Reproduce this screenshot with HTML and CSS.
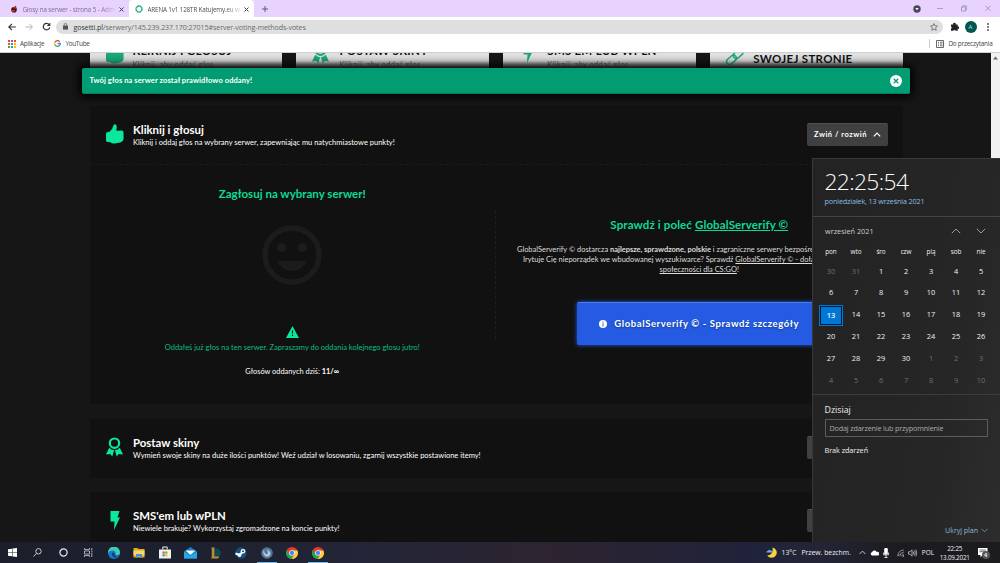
FILE: index.html
```html
<!DOCTYPE html>
<html lang="pl">
<head>
<meta charset="utf-8">
<title>ARENA 1v1 128TR Katujemy.eu</title>
<link rel="stylesheet" href="styles.css">
</head>
<body>
<svg width="0" height="0" class="defs">
  <symbol id="thumb" viewBox="0 0 18 20"><path d="M0 10 Q0 8.500 1.300 8.200 L3.500 7.800 Q6.500 5.500 7.600 1.200 Q8.200 0 9.400.300 Q11 1 10.700 3.500 L10.400 6.800 L16 6.600 Q17.800 7 17.500 9 L17.600 15 Q17 18 14.500 18.500 L8 19.500 Q5.500 19.500 4.500 18.200 L1.500 18 Q0 17.800 0 16Z"/></symbol>
  <symbol id="award" viewBox="0 0 17 20"><circle cx="8.500" cy="6.200" r="4.700" fill="none" stroke="currentColor" stroke-width="2.200"/><path d="M3.200 10.800 Q5 13 8.100 13.300 L6.300 19.500 4.300 17 0 17.600ZM13.800 10.800 Q12 13 8.900 13.300 L10.700 19.500 12.700 17 17 17.600Z"/></symbol>
  <symbol id="bolt" viewBox="0 0 10 19"><path d="M.5 0H9.500L7.500 6.500H10L4 19 4.500 10.500H.5Z"/></symbol>
  <symbol id="chrome" viewBox="0 0 12 12"><circle cx="6" cy="6" r="6" fill="#e8392c"/><path d="M.8 3 A6 6 0 0 0 5.500 12 L8.300 7.300 6 8.500 3.500 7Z" fill="#21a453"/><path d="M11.400 3.400H6L8.600 7.200 5.700 12A6 6 0 0 0 11.400 3.400Z" fill="#fdd23c"/><circle cx="6" cy="6" r="2.800" fill="#fff"/><circle cx="6" cy="6" r="2.150" fill="#4285f4"/></symbol>
</svg>
<div class="desktop">
  <header class="tabs">
    <div class="tab">
      <svg class="fav" viewBox="0 0 8 8"><circle cx="4" cy="4.800" r="2.800" fill="#3a1518"/><path d="M2.500 3 L6 .5 6.500 4Z" fill="#a33"/><path d="M2 5h3v1.500H2z" fill="#d33"/></svg>
      <span class="tab-title">Głosy na serwer - strona 5 - Adm</span><svg class="x" viewBox="0 0 5 5"><path d="M.5.500l4 4M4.500.500l-4 4"/></svg>
    </div>
    <div class="tab active">
      <svg class="fav" viewBox="0 0 8 8"><circle cx="4" cy="4" r="3" fill="none" stroke="#18a878" stroke-width="1.300" stroke-dasharray="2.100 .25"/></svg>
      <span class="tab-title">ARENA 1v1 128TR Katujemy.eu w</span><svg class="x" viewBox="0 0 5 5"><path d="M.5.500l4 4M4.500.500l-4 4"/></svg>
    </div>
    <svg class="plus" viewBox="0 0 8 8"><path d="M4 1v6M1 4h6" stroke="#555" stroke-width=".9"/></svg>
    <div class="winctl">
      <svg class="media" width="8" height="8" viewBox="0 0 8 8"><circle cx="4" cy="4" r="3.700" fill="#4c4657"/><path d="M2.300 3h3.400L4 5.200z" fill="#fff"/></svg>
      <svg width="6" height="8" viewBox="0 0 6 8"><path d="M0 3.500h6" stroke="#a093b3" stroke-width=".8"/></svg>
      <svg width="6" height="8" viewBox="0 0 6 8"><path d="M.5 2h4v4h-4zM1.700 2V.8h4v4H4.500" fill="none" stroke="#8f84a0" stroke-width=".7"/></svg>
      <svg width="6" height="8" viewBox="0 0 6 8"><path d="M.5.800l5 5M5.500.800l-5 5" stroke="#8f84a0" stroke-width=".7"/></svg>
    </div>
  </header>
  <div class="toolbar">
    <svg width="8" height="8" viewBox="0 0 8 8"><path d="M7.800 4H1M4 .8L.8 4 4 7.200" fill="none" stroke="#333" stroke-width="1.100"/></svg>
    <svg width="8" height="8" viewBox="0 0 8 8"><path d="M.5 4H7M4.300.800L7.500 4 4.300 7.200" fill="none" stroke="#aaa" stroke-width=".9"/></svg>
    <svg class="reload" width="9" height="9" viewBox="0 0 9 9"><path d="M7.200 2.600A3.300 3.300 0 1 0 7.800 5.300" fill="none" stroke="#333" stroke-width="1.200"/><path d="M8.300.500v3.500H4.800z" fill="#333"/></svg>
    <div class="omnibox">
      <svg width="5" height="7" viewBox="0 0 5 7"><path d="M0 2.600h5v4H0z" fill="#555"/><path d="M1.200 3V1.800a1.300 1.300 0 0 1 2.600 0V3" fill="none" stroke="#555" stroke-width=".7"/></svg>
      <span class="url"><b>gosetti.pl</b>/serwery/145.239.237.170:27015#server-voting-methods-votes</span>
      <svg class="star" width="8" height="8" viewBox="0 0 8 8"><path d="M4 .6l1 2.200 2.500.3L5.600 4.800l.6 2.500L4 6 1.800 7.300l.6-2.500L.5 3.100 3 2.800z" fill="none" stroke="#555" stroke-width=".7"/></svg>
    </div>
    <svg class="puzzle" width="8" height="9" viewBox="0 0 8 9"><path d="M0 2.400h2.200a1.300 1.300 0 1 1 2.500 0h2v2.100a1.200 1.200 0 1 1 0 2.300v2H4.600a1.200 1.200 0 0 0-2.300 0H0V6.600a1.200 1.200 0 0 0 0-2.200z" fill="#222"/></svg>
    <span class="avatar">A</span>
    <svg class="dots" width="2" height="8" viewBox="0 0 2 8"><circle cx="1" cy="1" r=".9"/><circle cx="1" cy="4" r=".9"/><circle cx="1" cy="7" r=".9"/></svg>
  </div>
  <div class="bookmarks">
    <svg width="8" height="8" viewBox="0 0 8 8"><path d="M0 0h2v2H0zM3 0h2v2H3zM6 0h2v2H6zM0 3h2v2H0z" fill="#e8493b"/><path d="M3 3h2v2H3z" fill="#4285f4"/><path d="M0 6h2v2H0zM3 6h2v2H3z" fill="#34a853"/><path d="M6 3h2v2H6zM6 6h2v2H6z" fill="#fbbc05"/></svg>
    <span class="bm1">Aplikacje</span>
    <svg width="7" height="7" viewBox="0 0 7 7" fill="none" stroke-width="1.300"><path d="M5.700 1.600A2.800 2.800 0 0 0 1 2.200" stroke="#ea4335"/><path d="M1 2.200A2.800 2.800 0 0 0 1 4.800" stroke="#fbbc05"/><path d="M1 4.800A2.800 2.800 0 0 0 5.200 5.700" stroke="#34a853"/><path d="M5.200 5.700A2.800 2.800 0 0 0 6.300 3.500H3.600" stroke="#4285f4"/></svg>
    <span class="bm2">YouTube</span>
    <div class="reading">
      <svg width="8" height="8" viewBox="0 0 8 8"><path d="M.5.500h7v7h-7zM2 2.300h1M4 2.300h2.500M2 4h1M4 4h2.500M2 5.700h1M4 5.700h2.500" fill="none" stroke="#444" stroke-width=".8"/></svg>
      <span>Do przeczytania</span>
    </div>
  </div>

  <main class="page">
    <div class="content">
      <div class="methods">
        <div class="method"><svg class="m-thumb"><use href="#thumb"/></svg><div><h3>KLIKNIJ I GŁOSUJ</h3><p>Kliknij, aby oddać głos</p></div></div>
        <div class="method"><svg class="m-award"><use href="#award"/></svg><div><h3>POSTAW SKINY</h3><p>Kliknij, aby oddać głos</p></div></div>
        <div class="method"><svg class="m-bolt"><use href="#bolt"/></svg><div><h3>SMS'EM LUB WPLN</h3><p>Kliknij, aby oddać głos</p></div></div>
        <div class="method last"><svg class="m-link" viewBox="0 0 18 18"><g fill="none" stroke="#18a878" stroke-width="1.500" transform="rotate(-42 9 9)"><rect x="-1" y="5.800" width="11" height="6" rx="3"/><rect x="8" y="5.800" width="11" height="6" rx="3"/></g></svg><div><h3>SWOJEJ STRONIE</h3></div></div>
      </div>

      <section class="panel open">
        <div class="head">
          <svg class="i-thumb"><use href="#thumb"/></svg>
          <div class="titles"><h2>Kliknij i głosuj</h2><p>Kliknij i oddaj głos na wybrany serwer, zapewniając mu natychmiastowe punkty!</p></div>
          <button class="toggle"><span>Zwiń / rozwiń</span><svg width="8" height="5" viewBox="0 0 8 5"><path d="M.8 4.300L4 1.100 7.200 4.300" fill="none" stroke="#fff" stroke-width="1.200"/></svg></button>
        </div>
        <div class="cols">
          <div class="vote">
            <h4>Zagłosuj na wybrany serwer!</h4>
            <svg class="smile" width="60" height="60" viewBox="0 0 60 60"><circle cx="30" cy="30" r="27" fill="none" stroke="#1c1c1c" stroke-width="5.500"/><circle cx="19.500" cy="22.500" r="4.500"/><circle cx="40.500" cy="22.500" r="4.500"/><path d="M15 36H45Q40 46 30 46T15 36Z"/></svg>
            <svg class="warn" width="13" height="12" viewBox="0 0 13 12"><path d="M6.500 0L13 12H0z" fill="#0ae8a0"/><path d="M6.500 4.500v3M6.500 8.700v1.400" stroke="#111" stroke-width="1.200"/></svg>
            <p class="done">Oddałeś już głos na ten serwer. Zapraszamy do oddania kolejnego głosu jutro!</p>
            <p class="count">Głosów oddanych dziś: <b>11/∞</b></p>
          </div>
          <div class="divider"></div>
          <div class="promo">
            <h4>Sprawdź i poleć <u>GlobalServerify ©</u></h4>
            <p class="l1">GlobalServerify © dostarcza <b>najlepsze, sprawdzone, polskie</b> i zagraniczne serwery bezpośrednio</p>
            <p class="l2">Irytuje Cię nieporządek we wbudowanej wyszukiwarce? Sprawdź <u>GlobalServerify © - dołącz do</u></p>
            <p class="l3"><u>społeczności dla CS:GO</u>!</p>
            <a class="cta"><svg width="8" height="8" viewBox="0 0 8 8"><circle cx="4" cy="4" r="4" fill="#fff"/><path d="M4 1.500v1.100M4 3.400v3" stroke="#245be2" stroke-width="1"/></svg><span>GlobalServerify © - Sprawdź szczegóły</span></a>
          </div>
        </div>
      </section>

      <section class="panel">
        <div class="head">
          <svg class="i-award"><use href="#award"/></svg>
          <div class="titles"><h2>Postaw skiny</h2><p>Wymień swoje skiny na duże ilości punktów! Weź udział w losowaniu, zgarnij wszystkie postawione itemy!</p></div>
          <button class="toggle"></button>
        </div>
      </section>
      <section class="panel">
        <div class="head">
          <svg class="i-bolt"><use href="#bolt"/></svg>
          <div class="titles"><h2>SMS'em lub wPLN</h2><p>Niewiele brakuje? Wykorzystaj zgromadzone na koncie punkty!</p></div>
          <button class="toggle"></button>
        </div>
      </section>
    </div>
    <div class="scroll"><svg width="5" height="4" viewBox="0 0 5 4"><path d="M0 3.500L2.500.500 5 3.500z" fill="#666"/></svg></div>
    <div class="toast"><span>Twój głos na serwer został prawidłowo oddany!</span>
      <svg width="12" height="12" viewBox="0 0 12 12"><circle cx="6" cy="6" r="6" fill="#fff"/><path d="M3.700 3.700l4.600 4.600M8.300 3.700L3.700 8.300" stroke="#029c72" stroke-width="1.300"/></svg></div>
  </main>

  <aside class="flyout">
    <div class="clock"><div class="time">22:25:54</div><div class="date">poniedziałek, 13 września 2021</div></div>
    <div class="cal">
      <div class="month"><span>wrzesień 2021</span>
        <svg width="10" height="6" viewBox="0 0 10 6"><path d="M.8 5.200L5 1 9.200 5.200"/></svg>
        <svg width="10" height="6" viewBox="0 0 10 6"><path d="M.8.800L5 5 9.200.800"/></svg></div>
      <div class="dow"><span>pon</span><span>wto</span><span>śro</span><span>czw</span><span>pią</span><span>sob</span><span>nie</span></div>
      <div class="days">
        <i>30</i><i>31</i><span>1</span><span>2</span><span>3</span><span>4</span><span>5</span>
        <span>6</span><span>7</span><span>8</span><span>9</span><span>10</span><span>11</span><span>12</span>
        <span class="today"><b>13</b></span><span>14</span><span>15</span><span>16</span><span>17</span><span>18</span><span>19</span>
        <span>20</span><span>21</span><span>22</span><span>23</span><span>24</span><span>25</span><span>26</span>
        <span>27</span><span>28</span><span>29</span><span>30</span><i>1</i><i>2</i><i>3</i>
        <i>4</i><i>5</i><i>6</i><i>7</i><i>8</i><i>9</i><i>10</i>
      </div>
    </div>
    <div class="agenda">
      <h5>Dzisiaj</h5>
      <div class="input"><span>Dodaj zdarzenie lub przypomnienie</span></div>
      <p>Brak zdarzeń</p>
      <div class="hide"><span>Ukryj plan</span><svg width="7" height="5" viewBox="0 0 7 5"><path d="M.5.800l3 3 3-3" fill="none" stroke="#8bb7d8" stroke-width=".7"/></svg></div>
    </div>
  </aside>

  <footer class="taskbar">
    <div class="apps">
      <div><svg width="9" height="9" viewBox="0 0 9 9"><path d="M0 1.300l4-.6v3.500H0zM4.500.600L9 0v4.200H4.500zM0 4.700h4v3.600l-4-.6zM4.500 4.700H9V9l-4.500-.6z" fill="#fff"/></svg></div>
      <div><svg width="9" height="9" viewBox="0 0 9 9"><circle cx="5.500" cy="3.300" r="2.700" fill="none" stroke="#ddd" stroke-width=".9"/><path d="M3.600 5.300L.5 8.500" stroke="#ddd" stroke-width=".9"/></svg></div>
      <div><svg width="9" height="9" viewBox="0 0 9 9"><circle cx="4.500" cy="4.500" r="3.600" fill="none" stroke="#eee" stroke-width="1.200"/></svg></div>
      <div><svg width="9" height="9" viewBox="0 0 9 9"><path d="M.5 0v1.500h5V0M.5 9V7.500h5V9M.5 3h5v3h-5zM7.800 0v2M7.800 4.500V9M7 3.200h1.600" fill="none" stroke="#ccc" stroke-width=".8"/></svg></div>
      <div><svg width="12" height="12" viewBox="0 0 12 12"><circle cx="6" cy="6" r="6" fill="#1677c9"/><path d="M0 5.500A6 6 0 0 1 12 5.500Q12 8 9.200 8 7 8 7.700 6.300 7.500 3.600 4.800 3.600 1.500 3.600 0 6.500Z" fill="#3fcdb0"/><path d="M4.500 5.500Q3 8 6 10.200 8.500 11 10.300 9.800 6 9.500 6.300 6Z" fill="#173c70"/></svg></div>
      <div><svg width="12" height="11" viewBox="0 0 12 11"><path d="M.5 1h4l1 1H11.500v8.500H.5z" fill="#e6a722"/><path d="M.5 3.500h11v5H.5z" fill="#fdd568"/><path d="M3 7h6v4H7.500V9h-3v2H3z" fill="#3c93d8"/></svg></div>
      <div><svg width="12" height="13" viewBox="0 0 12 13"><path d="M0 3.500h12V12.500H0z" fill="#f2f2f2"/><path d="M3.800 3.500V1h4.400v2.500" fill="none" stroke="#f2f2f2"/><path d="M3.500 5.500h2.200v2.200H3.500z" fill="#f25022"/><path d="M6.200 5.500h2.200v2.200H6.200z" fill="#7fba00"/><path d="M3.500 8.200h2.200v2.200H3.500z" fill="#00a4ef"/><path d="M6.200 8.200h2.200v2.200H6.200z" fill="#ffb900"/></svg></div>
      <div><svg width="13" height="12" viewBox="0 0 13 12"><path d="M0 4.500L6.500 0 13 4.500V11.500H0z" fill="#1680c8"/><path d="M1.500 3.500h10L6.500 8z" fill="#eef7fd"/><path d="M0 4.500L6.500 9 13 4.500v7H0z" fill="#2aa5e6"/></svg></div>
      <div><svg width="11" height="12" viewBox="0 0 11 12"><circle cx="6.200" cy="6" r="4.600" fill="#0c4a50"/><path d="M1 .5h4l-.7 1v8h5l-1.200 2H1l.8-1.200V1.700z" fill="#c28b37"/></svg></div>
      <div><svg width="12" height="12" viewBox="0 0 12 12"><circle cx="6" cy="6" r="5.700" fill="#155080"/><path d="M.5 6.500L5 8" stroke="#fff" stroke-width="2"/><circle cx="4.500" cy="8.300" r="1.800" fill="#fff"/><path d="M4.500 8L8 4.500" stroke="#fff" stroke-width="2.200"/><circle cx="8" cy="4.300" r="2.300" fill="#fff"/><circle cx="8" cy="4.300" r="1" fill="#155080"/></svg></div>
      <div class="run"><svg width="12" height="12" viewBox="0 0 12 12"><circle cx="6" cy="6" r="5.800" fill="#557699"/><path d="M3 2.500Q1 6 4 9 8 11 9.500 7 9.500 4 6 2.500 8 6 5.500 7.500 3 6.500 3 2.500Z" fill="#b4cadd"/></svg></div>
      <div><svg width="12" height="12"><use href="#chrome"/></svg></div>
      <div class="run"><svg width="12" height="12"><use href="#chrome"/></svg></div>
    </div>
    <div class="tray">
      <svg class="moon" width="12" height="12" viewBox="0 0 12 12"><path d="M6.500.500A5.200 5.200 0 1 1 1.200 8.500Q7.500 8 6.500.500Z" fill="#fbd044"/><path d="M.5 5.500Q.5 3.700 2.200 3.700 3.200 2 4.600 3.500 6.500 3.500 6.300 5.500Z" fill="#68b2ee"/></svg>
      <span class="temp">13°C</span><span class="wx">Przew. bezchm.</span>
      <svg class="up" width="7" height="5" viewBox="0 0 7 5"><path d="M.6 4L3.500 1.100 6.400 4" fill="none" stroke="#ddd" stroke-width=".9"/></svg>
      <svg class="cloud" width="9" height="6" viewBox="0 0 9 6"><path d="M2 5.500a1.700 1.700 0 0 1 0-3.300 2.600 2.600 0 0 1 4.700-.2A1.800 1.800 0 1 1 7.200 5.500z" fill="#fff"/></svg>
      <svg class="mic" width="6" height="10" viewBox="0 0 6 10"><rect x="1.200" y="0" width="3.600" height="6.500" rx="1.200" fill="#fff"/><path d="M.4 4.500v2.300h5.200V4.500M3 7v2.600M1.500 9.500h3" stroke="#fff" fill="none" stroke-width=".8"/></svg>
      <svg class="wifi" width="8" height="8" viewBox="0 0 8 8"><path d="M.8 7Q1 1.500 6.800 1M2.800 7.300Q3 3.500 6.800 3M4.700 7.300Q5 5.300 6.800 5M.8 7L2.500 5.400" fill="none" stroke="#bbb" stroke-width=".7"/><circle cx="6.400" cy="7" r=".7" fill="#ccc"/></svg>
      <svg class="vol" width="9" height="8" viewBox="0 0 9 8"><path d="M.5 2.800H2L4 .8v6.400L2 5.200H.5zM5.200 2.500q1 1.500 0 3M6.500 1.500q1.500 2.500 0 5M7.800.600q2 3.400 0 6.800" fill="none" stroke="#ddd" stroke-width=".7"/></svg>
      <span class="lang">POL</span>
      <div class="dt"><span>22:25</span><span>13.09.2021</span></div>
      <div class="notif"><svg width="10" height="10" viewBox="0 0 10 10"><path d="M0 0h9.500v7H4.500L2.500 9.500V7H0z" fill="#fff"/><path d="M1.500 2h6.500M1.500 3.700h6.500" stroke="#333" stroke-width=".7"/></svg><b>4</b></div>
    </div>
  </footer>
</div>
</body>
</html>
```
FILE: styles.css
```css
* { box-sizing: border-box; margin: 0; padding: 0; }
body { background: #161616; overflow: hidden; }
.defs { position: absolute; }
svg { display: block; flex: none; }
span, p, h2, h3, h4, h5 { white-space: nowrap; }
.desktop { position: relative; width: 1000px; height: 563px; display: flex; flex-direction: column; font-family: "Open Sans", "Noto Sans", sans-serif; font-size: 6.500px; color: #444; overflow: hidden; }

/* browser chrome */
.tabs { height: 17px; flex: none; background: #e8d2fe; display: flex; align-items: center; }
.tab { height: 17px; width: 129px; padding: 1px 5.500px 0 10px; display: flex; align-items: center; justify-content: space-between; color: #766b80; }
.tab.active { background: #fff; border-radius: 4px 4px 0 0; width: 125px; padding-left: 6px; color: #555; }
.fav { width: 8px; height: 8px; }
.tab-title { margin: 0 auto 0 4.500px; font-size: 6.300px; letter-spacing: -.1px; }
.active .tab-title { letter-spacing: -.15px; }
.tab:not(.active) .tab-title { background: linear-gradient(90deg, #766b80 84%, #d0bfe2); background-clip: text; -webkit-background-clip: text; color: transparent; }
.active .tab-title { background: linear-gradient(90deg, #444 84%, #ddd); background-clip: text; -webkit-background-clip: text; color: transparent; }
.x { width: 5px; height: 5px; stroke: #444; stroke-width: 1; }
.plus { width: 8px; height: 8px; margin-left: 7px; }
.winctl { margin-left: auto; display: flex; gap: 18px; padding-right: 9px; }
.winctl .media { margin-right: -2px; }
.toolbar { height: 19px; flex: none; background: #fff; display: flex; align-items: center; padding-left: 7.500px; }
.toolbar > svg { margin-right: 9px; }
.toolbar > svg.reload { margin-right: 7.500px; }
.omnibox { width: 887px; height: 14px; border-radius: 7px; background: #dfdfdf; flex: none; margin-left: -2px; display: flex; align-items: center; padding: 0 5.500px 0 7px; margin-right: 7.500px; }
.url { margin-left: 5.500px; font-size: 7.100px; letter-spacing: -.08px; color: #6a6a6a; }
.url b { font-weight: 400; color: #333; }
.star { margin-left: auto; }
.toolbar > svg.puzzle { margin-right: 6px; }
.avatar { width: 12px; height: 12px; border-radius: 50%; background: #00574b; color: #cde; font-size: 6px; line-height: 12px; text-align: center; }
.toolbar > svg.dots { margin: 0 0 0 10px; fill: #444; }
.bookmarks { height: 17px; flex: none; background: #fff; border-bottom: 1px solid #cfcfcf; display: flex; align-items: center; padding: 0 7.500px 1px 7.500px; font-size: 6.400px; letter-spacing: -.22px; }
.bm1 { margin: 0 9.500px 0 4.500px; }
.bm2 { margin-left: 4.500px; letter-spacing: -.3px; }
.reading { margin-left: auto; display: flex; align-items: center; gap: 4.500px; border-left: 1px solid #ccc; padding-left: 5.500px; height: 9px; }

/* page */
.page { position: relative; flex: 1; min-height: 0; overflow: hidden; background: #161616; display: flex; font-family: Lato, "Open Sans", sans-serif; color: #fff; }
.content { width: 813px; margin-left: 89.500px; flex: none; }
.scroll { margin-left: auto; width: 9px; background: #f1f1f1; padding: 3px 2px; }
.methods { display: flex; gap: 14.700px; height: 38px; overflow: hidden; }
.method { flex: 1; background: linear-gradient(#e2e2e2 0, #dadada 8px, #5a5a5a 15px); display: flex; height: 15px; color: #111; }
.method svg { fill: #18a878; color: #18a878; }
.method h3 { font-size: 11.500px; line-height: 12px; margin-top: -8px; letter-spacing: .3px; font-weight: 700; }
.method p { font-size: 7.400px; line-height: 9px; margin-top: 2.500px; color: #555; letter-spacing: .42px; }
.method.last h3 { margin-top: 0; }
.m-thumb { width: 18px; height: 20px; margin: -9px 9px 0 16px; }
.m-award { width: 17px; height: 20px; margin: -9px 10px 0 16px; }
.m-bolt { width: 10px; height: 19px; margin: -9px 14px 0 20px; }
.m-link { width: 18px; height: 18px; margin: -5px 9px 0 16px; overflow: visible; }
.panel { background: #111; height: 59px; margin-bottom: 14.500px; border-radius: 3px; }
.panel.open { height: 298px; margin-top: 15px; }
.head { height: 59px; display: flex; align-items: center; padding: 0 14.500px 2px 16.500px; }
.open .head { border-bottom: 1px dashed #1a1a1a; }
.head svg { fill: #0ae8a0; color: #0ae8a0; }
.i-thumb { width: 18px; height: 20px; margin-right: 9px; }
.i-award { width: 17px; height: 20px; margin-right: 10px; }
.i-bolt { width: 10px; height: 19px; margin: 0 13.500px 0 3.500px; }
.titles { padding-top: 2px; }
.titles h2 { font-size: 11.400px; line-height: 14px; font-weight: 700; }
.titles p { font-size: 7.500px; line-height: 11px; }
.toggle { margin-left: auto; width: 81px; height: 23px; border: 0; border-top: 1px solid #505050; border-radius: 2px; background: #404040; color: #fff; font: 700 7.500px Lato, sans-serif; letter-spacing: .52px; display: flex; align-items: center; justify-content: center; gap: 6px; }
.head .toggle svg { fill: none; }
.cols { display: flex; height: 239px; }
.vote { width: 405.500px; display: flex; flex-direction: column; align-items: center; padding-top: 21px; }
.vote h4, .promo h4 { font-size: 11.550px; line-height: 16px; color: #0cda95; font-weight: 700; }
.smile { margin-top: 23px; fill: #1c1c1c; }
.warn { margin-top: 41px; }
.done { margin-top: 5px; font-size: 7.500px; line-height: 10px; color: #0bbd83; }
.count { margin-top: 14px; font-size: 7.400px; line-height: 10px; }
.divider { width: 1px; height: 128px; margin-top: 46px; border-left: 1px dashed #1d1d1d; }
.promo { flex: 1; padding-top: 52px; text-align: center; display: flex; flex-direction: column; align-items: center; }
.promo p { font-size: 7.450px; line-height: 10px; color: #ddd; }
.promo h4 { margin-bottom: 12px; letter-spacing: .1px; }
.promo p.l1 { align-self: flex-start; margin-left: 21px; }
.promo p.l2 { align-self: flex-start; margin-left: 27px; }
.cta { margin-top: 26.500px; width: 244px; height: 43px; background: #245be2; border-top: 1px solid #4c7bee; border-radius: 2px; box-shadow: 0 0 4px #245be2; display: flex; align-items: center; justify-content: center; gap: 7px; font-size: 9.500px; font-weight: 700; letter-spacing: .6px; text-shadow: 0 1px 2px rgba(0,0,0,.4); }
.toast { position: absolute; left: 82px; top: 15px; width: 828px; height: 26px; background: #029c72; border-radius: 2px; border-bottom: 1px solid #027d5b; box-shadow: 0 0 9px 3px #000; display: flex; align-items: center; justify-content: space-between; padding: 0 8px 0 7.500px; font-size: 7.500px; letter-spacing: .1px; font-weight: 700; }

/* calendar flyout */
.flyout { position: absolute; left: 812px; top: 158px; width: 188px; height: 384px; background: linear-gradient(100deg, #232323, #262626 70%, #2d2d2d); border: 1px solid #383838; border-right: 0; border-bottom: 0; color: #eee; }
.clock { height: 58px; border-bottom: 1px solid #444; padding: 8px 0 0 11.500px; }
.time { font-size: 22.800px; line-height: 29px; font-weight: 300; letter-spacing: -.65px; color: #fff; }
.date { font-size: 7.200px; line-height: 11px; letter-spacing: -.13px; color: #8bbde4; }
.cal { height: 178px; border-bottom: 1px solid #3c3c3c; }
.month { height: 28px; display: flex; align-items: center; padding: 0 14px 0 12px; font-size: 7.300px; color: #ccc; }
.month span { margin-right: auto; }
.month svg { margin-left: 15px; fill: none; stroke: #bbb; stroke-width: .8; }
.dow, .days { display: grid; grid-template-columns: repeat(7, 25px); padding-left: 5.500px; text-align: center; }
.dow { font-size: 6.400px; line-height: 13px; letter-spacing: -.1px; }
.days { grid-auto-rows: 21.850px; line-height: 21.850px; font-size: 7.400px; margin-top: 2.500px; }
.days i { font-style: normal; color: #707070; }
.days span { color: #f2f2f2; }
.today { display: flex; align-items: center; justify-content: center; }
.today b { width: 24px; height: 21px; background: #0078d7; border: 1px solid #0078d7; box-shadow: inset 0 0 0 1px #001a30; line-height: 19px; font-weight: 600; }
.agenda { padding: 8.500px 12px 0 11.500px; display: flex; flex-direction: column; height: 147px; }
.agenda h5 { font-size: 8.800px; line-height: 13px; font-weight: 400; }
.input { margin-top: 2.500px; height: 18px; border: 1px solid #5c5c5c; font-size: 7.200px; line-height: 16px; padding-left: 4px; letter-spacing: -.14px; color: #aaa; }
.agenda p { font-size: 7.300px; line-height: 10px; margin-top: 7.500px; letter-spacing: -.07px; }
.hide { margin-top: auto; padding-bottom: 7px; font-size: 7.100px; line-height: 10px; color: #8bb7d8; display: flex; align-items: center; justify-content: flex-end; gap: 3px; letter-spacing: -.05px; }

/* taskbar */
.taskbar { height: 21px; flex: none; background: linear-gradient(90deg, #1b1e2b, #1e2231 25%, #232638 36%, #2d2430 55%, #20223a 75%, #232536 82%, #1b1b20 90%, #1c1c1f); display: flex; color: #eee; }
.apps { display: flex; margin-left: -.5px; }
.apps > div { width: 25.460px; display: flex; align-items: center; justify-content: center; }
.apps > .run { background: linear-gradient(#76b9ed, #76b9ed) center bottom / 20px 1px no-repeat; }
.tray { margin-left: auto; display: flex; align-items: center; width: 234.500px; padding-right: 2px; border-right: 0; font-size: 6.800px; }
.temp { margin-left: 4px; }
.wx { margin-left: 5px; }
.up { margin-left: 8.500px; }
.cloud { margin-left: 4px; }
.mic { margin-left: 4px; }
.wifi { margin-left: 7.500px; }
.vol { margin-left: 3px; }
.lang { margin-left: 5px; font-size: 6.500px; }
.dt { margin-left: 6.500px; width: 28px; display: flex; flex-direction: column; align-items: center; font-size: 6.300px; line-height: 9px; letter-spacing: -.22px; }
.notif { position: relative; margin-left: 9px; }
.notif b { position: absolute; left: 4px; top: 3px; width: 8px; height: 8px; border-radius: 50%; background: #555; font-size: 5.500px; line-height: 8px; text-align: center; }
```
